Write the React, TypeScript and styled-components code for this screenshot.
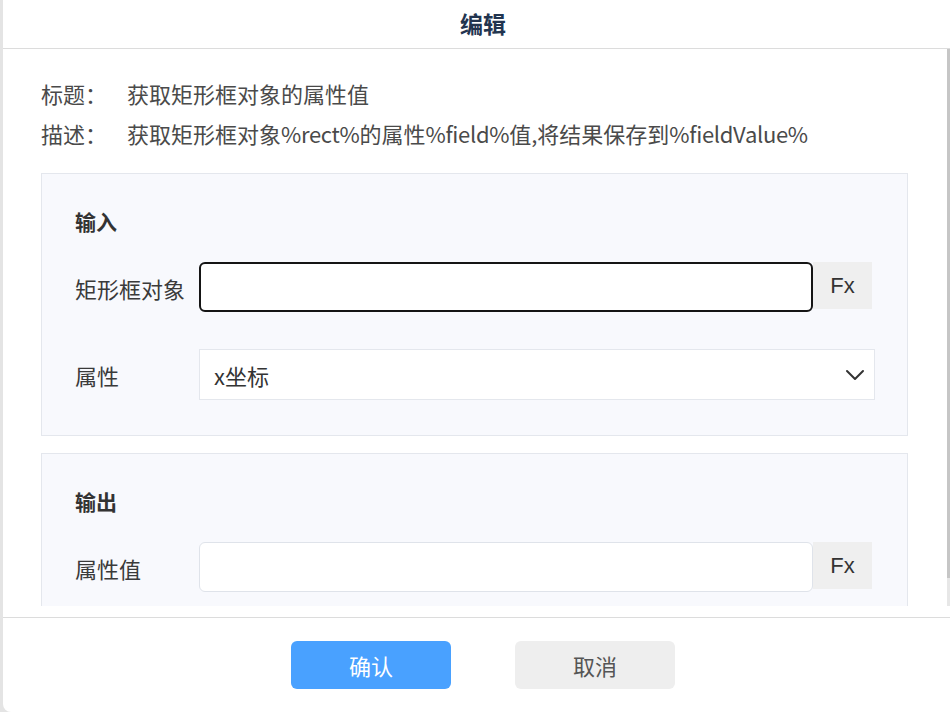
import React from 'react'
import styled, { createGlobalStyle, css } from 'styled-components'

const GlobalStyle = createGlobalStyle`
    html, body {
        margin: 0;
        padding: 0;
        height: 100%;
        overflow: hidden;
        background: #e4e4e4;
    }
    body {
        font-family: "Noto Sans CJK SC", "Noto Sans", sans-serif;
        color: #333;
    }
    * { box-sizing: border-box; }
`

const Dialog = styled.div`
    margin-left: 3px;
    width: 960px;
    height: 712px;
    background: #fff;
    border-radius: 0 0 8px 8px;
    display: flex;
    flex-direction: column;
    overflow: hidden;
`

const Header = styled.div`
    height: 49px;
    flex: none;
    display: flex;
    align-items: center;
    justify-content: center;
    border-bottom: 1px solid #dcdcdc;
    font-size: 23px;
    font-weight: 700;
    color: #22344f;
    padding-bottom: 2px;
`

// the scrollbar is painted as a background strip: the page hides real scrollbars
const Body = styled.div`
    width: 947px;
    height: 557px;
    flex: none;
    overflow: hidden;
    padding: 24px 42px 24px 38px;
    background:
        linear-gradient(#c6c6c6, #c6c6c6) right top / 3px 95% no-repeat,
        linear-gradient(#e7e7e7, #e7e7e7) right top / 3px 100% no-repeat,
        #fff;
`

const InfoRow = styled.div`
    display: flex;
    align-items: center;
    height: 40px;
    font-size: 22px;
    color: #4a4a4a;
    white-space: nowrap;
`

const InfoLabel = styled.span`
    width: 86px;
    flex: none;
`

const Latin = styled.span`
    letter-spacing: -0.3px;
`

const Section = styled.div<{ $first?: boolean }>`
    margin-top: ${({ $first }) => ($first ? '20px' : '17px')};
    background: #f8f9fd;
    border: 1px solid #e4e7ed;
    padding: 32px 32px 35px 33px;
    display: flex;
    flex-direction: column;
    gap: 37px;
`

const SectionTitle = styled.div`
    height: 30px;
    line-height: 30px;
    font-size: 21px;
    font-weight: 700;
    color: #333;
    margin-bottom: -11px;
`

const FieldRow = styled.div`
    display: flex;
    align-items: flex-start;
`

const FieldLabel = styled.div`
    width: 124px;
    flex: none;
    height: 50px;
    line-height: 52px;
    font-size: 22px;
    color: #3a3a3a;
    white-space: nowrap;
`

const TextInput = styled.div<{ $focused?: boolean }>`
    flex: 1;
    height: 50px;
    background: #fff;
    border-radius: 6px;
    ${({ $focused }) =>
        $focused
            ? css`border: 2px solid #151515;`
            : css`border: 1px solid #dfe3ea;`}
`

const FxButton = styled.div`
    width: 59px;
    height: 47px;
    flex: none;
    margin-right: 3px;
    background: #efefef;
    display: flex;
    align-items: center;
    justify-content: center;
    font-family: "Liberation Sans", Arial, sans-serif;
    font-size: 22px;
    color: #333;
`

const Select = styled.div`
    flex: 1;
    height: 51px;
    background: #fff;
    border: 1px solid #e4e7ed;
    display: flex;
    align-items: center;
    justify-content: space-between;
    padding: 0 9px 0 14px;
    font-size: 22px;
    color: #333;
`

const Footer = styled.div`
    margin-top: 11px;
    flex: 1;
    border-top: 1px solid #dcdcdc;
    display: flex;
    justify-content: center;
    align-items: flex-start;
    padding-top: 23px;
    gap: 64px;
`

const Button = styled.button<{ $primary?: boolean }>`
    width: 160px;
    height: 48px;
    border: none;
    border-radius: 6px;
    font-family: inherit;
    font-size: 22px;
    cursor: pointer;
    background: ${({ $primary }) => ($primary ? '#49a1ff' : '#eeeeee')};
    color: ${({ $primary }) => ($primary ? '#fff' : '#555')};
`

const Chevron = () => (
    <svg width="20" height="12" viewBox="0 0 20 12" fill="none">
        <path d="M2 2 L10 10 L18 2" stroke="#333" strokeWidth="2" strokeLinecap="round" strokeLinejoin="round" />
    </svg>
)

export default function App() {
    return <>
        <GlobalStyle />
        <Dialog>
            <Header>编辑</Header>
            <Body>
                <InfoRow>
                    <InfoLabel>标题：</InfoLabel>
                    <span>获取矩形框对象的属性值</span>
                </InfoRow>
                <InfoRow>
                    <InfoLabel>描述：</InfoLabel>
                    <span>
                        获取矩形框对象<Latin>%rect%</Latin>的属性<Latin>%field%</Latin>值,将结果保存到<Latin>%fieldValue%</Latin>
                    </span>
                </InfoRow>

                <Section $first>
                    <SectionTitle>输入</SectionTitle>
                    <FieldRow>
                        <FieldLabel>矩形框对象</FieldLabel>
                        <TextInput $focused />
                        <FxButton>Fx</FxButton>
                    </FieldRow>
                    <FieldRow>
                        <FieldLabel>属性</FieldLabel>
                        <Select>
                            <span>x坐标</span>
                            <Chevron />
                        </Select>
                    </FieldRow>
                </Section>

                <Section>
                    <SectionTitle>输出</SectionTitle>
                    <FieldRow>
                        <FieldLabel>属性值</FieldLabel>
                        <TextInput />
                        <FxButton>Fx</FxButton>
                    </FieldRow>
                </Section>
            </Body>
            <Footer>
                <Button $primary>确认</Button>
                <Button>取消</Button>
            </Footer>
        </Dialog>
    </>
}
